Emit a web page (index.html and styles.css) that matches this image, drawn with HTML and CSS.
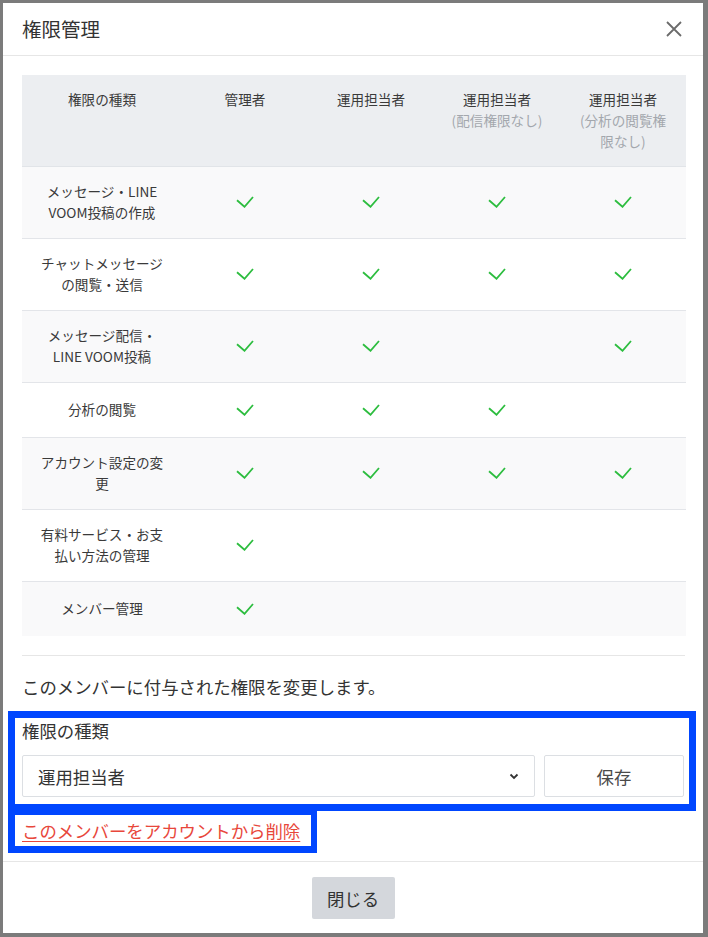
FILE: index.html
```html
<!DOCTYPE html>
<html lang="ja">
<head>
<meta charset="utf-8">
<title>権限管理</title>
<link rel="stylesheet" href="styles.css">
</head>
<body>
<div class="modal">
  <div class="modal-header">
    <h1 class="modal-title">権限管理</h1>
    <button class="close-x" aria-label="閉じる">
      <svg width="16" height="16" viewBox="0 0 16 16"><path d="M1 1L15 15M15 1L1 15" stroke="#6b6b6b" stroke-width="1.8" fill="none"/></svg>
    </button>
  </div>
  <div class="modal-body">
    <table class="perm-table">
      <colgroup>
        <col class="col-name"><col class="col-role"><col class="col-role"><col class="col-role"><col class="col-role">
      </colgroup>
      <thead>
        <tr>
          <th>権限の種類</th>
          <th>管理者</th>
          <th>運用担当者</th>
          <th>運用担当者<br><span class="sub">(配信権限なし)</span></th>
          <th>運用担当者<br><span class="sub">(分析の閲覧権<br>限なし)</span></th>
        </tr>
      </thead>
      <tbody>
        <tr class="alt">
          <td>メッセージ・LINE<br>VOOM投稿の作成</td>
          <td><span class="check"></span></td><td><span class="check"></span></td><td><span class="check"></span></td><td><span class="check"></span></td>
        </tr>
        <tr>
          <td>チャットメッセージ<br>の閲覧・送信</td>
          <td><span class="check"></span></td><td><span class="check"></span></td><td><span class="check"></span></td><td><span class="check"></span></td>
        </tr>
        <tr class="alt">
          <td>メッセージ配信・<br>LINE VOOM投稿</td>
          <td><span class="check"></span></td><td><span class="check"></span></td><td></td><td><span class="check"></span></td>
        </tr>
        <tr>
          <td>分析の閲覧</td>
          <td><span class="check"></span></td><td><span class="check"></span></td><td><span class="check"></span></td><td></td>
        </tr>
        <tr class="alt">
          <td>アカウント設定の変<br>更</td>
          <td><span class="check"></span></td><td><span class="check"></span></td><td><span class="check"></span></td><td><span class="check"></span></td>
        </tr>
        <tr>
          <td>有料サービス・お支<br>払い方法の管理</td>
          <td><span class="check"></span></td><td></td><td></td><td></td>
        </tr>
        <tr class="alt last">
          <td>メンバー管理</td>
          <td><span class="check"></span></td><td></td><td></td><td></td>
        </tr>
      </tbody>
    </table>
    <hr class="divider">
    <p class="desc">このメンバーに付与された権限を変更します。</p>
    <div class="highlight role-box">
      <div class="field-label">権限の種類</div>
      <div class="field-row">
        <div class="select">
          <span>運用担当者</span>
          <svg width="10" height="7" viewBox="0 0 10 7"><path d="M1.5 1.5L5 5L8.5 1.5" stroke="#333" stroke-width="1.8" fill="none"/></svg>
        </div>
        <button class="save-btn">保存</button>
      </div>
    </div>
    <div class="highlight delete-box">
      <a class="delete-link" href="#">このメンバーをアカウントから削除</a>
    </div>
  </div>
  <div class="modal-footer">
    <button class="close-btn">閉じる</button>
  </div>
</div>
<script>
  document.querySelectorAll('.check').forEach(function (el) {
    el.innerHTML = '<svg width="18" height="12" viewBox="0 0 18 12"><polyline points="1,4.3 8.5,10.8 17,1" fill="none" stroke="#2dbd3f" stroke-width="1.8"/></svg>';
  });
</script>
</body>
</html>
```

FILE: styles.css
```css
* { box-sizing: border-box; }

html, body {
  margin: 0;
  padding: 0;
}

body {
  background: #7b7b7b;
  font-family: "Noto Sans CJK JP", "Noto Sans", sans-serif;
  color: #333;
  width: 708px;
  height: 937px;
  overflow: hidden;
}

.modal {
  margin: 3px 0 0 3px;
  width: 700px;
  height: 930px;
  background: #fff;
  display: flex;
  flex-direction: column;
}

.modal-header {
  height: 53px;
  border-bottom: 1px solid #e6e6e6;
  display: flex;
  align-items: center;
  justify-content: space-between;
  padding: 0 21px 0 19px;
}

.modal-title {
  margin: 0;
  font-size: 19.5px;
  font-weight: 400;
  line-height: 1;
  color: #333;
}

.close-x {
  border: 0;
  background: none;
  padding: 0;
  width: 16px;
  height: 16px;
  display: flex;
}

.modal-body {
  flex: 1;
  padding: 19px 18px 8px 19px;
}

.perm-table {
  width: 663px;
  border-collapse: collapse;
  table-layout: fixed;
  font-size: 13.6px;
  line-height: 21px;
  color: #3a3a3a;
}

.col-name { width: 160px; }
.col-role { width: 126px; }

.perm-table th {
  background: #eceef1;
  font-weight: 400;
  text-align: center;
  vertical-align: top;
  padding: 14px 2px 14px;
  border-bottom: 1px solid #e1e4e8;
  height: 92px;
}

.perm-table .sub {
  color: #a3a7ad;
}

.perm-table td {
  text-align: center;
  vertical-align: middle;
  padding: 14px 2px 15px;
  border-bottom: 1px solid #e3e5e9;
}

.perm-table tr.alt td {
  background: #f9f9fa;
}

.perm-table tr.last td {
  border-bottom: 0;
}

.check {
  display: flex;
  height: 25px;
  align-items: center;
  justify-content: center;
}

.check svg { display: block; }

.divider {
  border: 0;
  border-top: 1px solid #e6e6e6;
  margin: 19px 0 0;
}

.desc {
  margin: 19px 0 0;
  font-size: 17.4px;
  line-height: 24px;
}

.highlight {
  border-style: solid;
  border-color: #0046ff;
}

.role-box {
  margin: 12px -11px 0 -14px;
  border-width: 7px;
  padding: 2px 4px 7px 7px;
}

.field-label {
  font-size: 17.4px;
  line-height: 22px;
}

.field-row {
  margin-top: 13px;
  display: flex;
  gap: 9px;
}

.select {
  width: 513px;
  height: 42px;
  border: 1px solid #dcdfe3;
  border-radius: 2px;
  display: flex;
  align-items: center;
  justify-content: space-between;
  padding: 0 15px 0 15px;
  font-size: 17.4px;
  color: #333;
}

.select svg { display: block; }

.save-btn {
  width: 140px;
  height: 42px;
  border: 1px solid #dcdfe3;
  border-radius: 2px;
  background: #fff;
  font-family: inherit;
  font-size: 17.4px;
  color: #4a4a4a;
  padding: 0;
}

.delete-box {
  margin: -2px 0 0 -14px;
  width: 309px;
  border-width: 6px 6px 7px 7px;
  padding: 0 0 0 7px;
}

.delete-link {
  display: block;
  font-size: 17.4px;
  line-height: 31px;
  color: #e8473b;
  text-decoration: underline;
  text-underline-offset: 3px;
  text-decoration-thickness: 1px;
}

.modal-footer {
  border-top: 1px solid #e6e6e6;
  height: 72px;
  padding-top: 15px;
  display: flex;
  justify-content: center;
  align-items: flex-start;
}

.close-btn {
  width: 83px;
  height: 42px;
  border: 0;
  border-radius: 2px;
  background: #d4d7dc;
  font-family: inherit;
  font-size: 17.4px;
  color: #333;
  padding: 0;
}
```
